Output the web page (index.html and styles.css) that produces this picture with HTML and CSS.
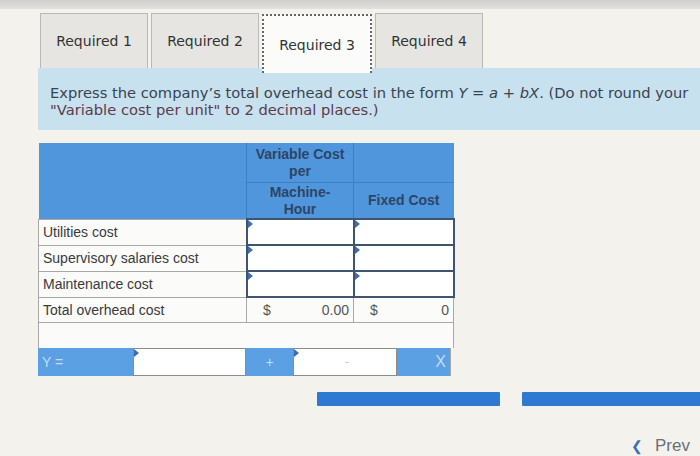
FILE: index.html
```html
<!DOCTYPE html>
<html>
<head>
<meta charset="utf-8">
<link rel="stylesheet" href="styles.css">
</head>
<body>
<div class="topstrip"></div>
<div class="page">
  <div class="tabs">
    <div class="tab">Required 1</div>
    <div class="tab">Required 2</div>
    <div class="tab active">Required 3</div>
    <div class="tab">Required 4</div>
  </div>
  <div class="prompt">
    <div class="line">Express the company’s total overhead cost in the form <i>Y</i> = <i>a</i> + <i>bX</i>. (Do not round your</div>
    <div class="line">"Variable cost per unit" to 2 decimal places.)</div>
  </div>
  <table class="grid">
    <colgroup><col class="c1"><col class="c2"><col class="c3"></colgroup>
    <tr class="h1"><th></th><th class="hb">Variable Cost<br>per</th><th class="hb"></th></tr>
    <tr class="h2"><th></th><th>Machine-<br>Hour</th><th>Fixed Cost</th></tr>
    <tr><td class="lab">Utilities cost</td><td class="inp"><span class="mark"></span></td><td class="inp"><span class="mark"></span></td></tr>
    <tr><td class="lab">Supervisory salaries cost</td><td class="inp"><span class="mark"></span></td><td class="inp"><span class="mark"></span></td></tr>
    <tr><td class="lab">Maintenance cost</td><td class="inp"><span class="mark"></span></td><td class="inp"><span class="mark"></span></td></tr>
    <tr><td class="lab">Total overhead cost</td><td class="tot"><span>$</span><span>0.00</span></td><td class="tot"><span>$</span><span>0</span></td></tr>
    <tr class="empty"><td colspan="3"></td></tr>
  </table>
  <div class="yrow">
    <div class="yb ylab">Y =</div>
    <div class="yin w1"><span class="mark"></span></div>
    <div class="yb plus">+</div>
    <div class="yin w2"><span class="mark"></span><span class="dot">-</span></div>
    <div class="yb xlab">X</div>
  </div>
  <div class="btns">
    <div class="bar b1"></div>
    <div class="bar b2"></div>
  </div>
  <div class="nav">
    <span class="chev">&#10094;</span><span class="prev">Prev</span>
  </div>
</div>
</body>
</html>
```
FILE: styles.css
```css
html, body {
  margin: 0;
  padding: 0;
  width: 700px;
  height: 456px;
  overflow: hidden;
  background: #f4f2ed;
}
.topstrip {
  height: 9px;
  background: linear-gradient(#cfcfcd, #e2e1de);
}
.page {
  padding-left: 38px;
}
.tabs {
  display: flex;
  gap: 3px;
  padding-left: 2px;
  margin-top: 4px;
  height: 55px;
}
.tab {
  width: 106px;
  height: 54px;
  background: #e6e5e2;
  border: 1px solid #b9b9b7;
  border-bottom: none;
  font-family: "DejaVu Sans", Verdana, sans-serif;
  font-size: 14px;
  color: #333;
  display: flex;
  align-items: center;
  justify-content: center;
  box-sizing: content-box;
}
.tab.active {
  background: #fbfbf9;
  border: 2px dotted #666;
  border-bottom: none;
  height: 57px;
  margin-top: 1px;
  position: relative;
  z-index: 2;
}
.prompt {
  background: #c7e1ef;
  height: 62px;
  padding: 16px 0 0 12px;
  box-sizing: border-box;
  font-family: "DejaVu Sans", Verdana, sans-serif;
  font-size: 14.7px;
  line-height: 17px;
  color: #3a4450;
  white-space: nowrap;
  overflow: hidden;
}
.prompt .line:nth-child(2) {
  color: #5e3a4a;
}
.grid {
  margin-top: 13px;
  border-collapse: collapse;
  table-layout: fixed;
  width: 415px;
  font-family: "Liberation Sans", Arial, sans-serif;
  font-size: 14px;
  color: #3a3a3a;
}
.c1 { width: 208px; }
.c2 { width: 107px; }
.c3 { width: 100px; }
.grid th {
  background: #5096dc;
  color: #2d4566;
  font-weight: bold;
  font-size: 14px;
  line-height: 17px;
  padding: 0;
  text-align: center;
}
.grid .h1 th { height: 36px; vertical-align: top; padding-top: 3px; }
.grid .h2 th { height: 35px; }
.grid .h1 th.hb { border-bottom: 1px solid #3f7fc0; }
.grid .h1 th + th, .grid .h2 th + th { border-left: 1px solid #3f7fc0; }
.grid td {
  height: 24px;
  padding: 0;
  border: 1px solid #a8a8a8;
  background: #fbfbfa;
}
.grid td.lab {
  padding-left: 4px;
  white-space: nowrap;
}
.grid td.inp {
  border: 2px solid #3e5470;
  background: #ffffff;
  position: relative;
}
.mark {
  position: absolute;
  left: 0;
  top: 0;
  width: 0;
  height: 0;
  border-top: 4px solid transparent;
  border-bottom: 4px solid transparent;
  border-left: 5px solid #3d6cb0;
}
.grid td.tot {
  color: #555;
  padding: 0 4px 0 16px;
}
.grid td.tot span:first-child { float: left; }
.grid td.tot span:last-child { float: right; }
.grid tr.empty td {
  height: 25px;
  border-bottom: none;
}
.yrow {
  display: flex;
  width: 412px;
  height: 28px;
  font-family: "Liberation Sans", Arial, sans-serif;
  font-size: 14px;
  border-right: 1px solid #a8a8a8;
}
.yb {
  background: #5aa0e3;
  color: #c5dcf4;
  display: flex;
  align-items: center;
}
.ylab { width: 95px; padding-left: 4px; box-sizing: border-box; }
.plus { width: 47px; justify-content: center; }
.xlab { width: 53px; justify-content: flex-end; padding-right: 4px; box-sizing: border-box; font-size: 16px; }
.yin {
  background: #fff;
  border: 1px solid #8c8c8c;
  box-sizing: border-box;
  position: relative;
}
.w1 { width: 113px; }
.w2 { width: 104px; }
.dot {
  position: absolute;
  left: 50%;
  top: 6px;
  color: #bbb;
  font-size: 11px;
}
.btns {
  position: relative;
  height: 60px;
}
.bar {
  position: absolute;
  top: 16px;
  height: 14px;
  background: #2e79d2;
  border-radius: 1px;
}
.b1 { left: 279px; width: 183px; }
.b2 { left: 484px; width: 200px; }
.nav {
  display: flex;
  justify-content: flex-end;
  align-items: center;
  padding-right: 10px;
  gap: 12px;
  font-family: "Liberation Sans", Arial, sans-serif;
}
.chev {
  color: #3a6fc0;
  font-size: 14px;
}
.prev {
  color: #6a6e78;
  font-size: 17px;
}
```
